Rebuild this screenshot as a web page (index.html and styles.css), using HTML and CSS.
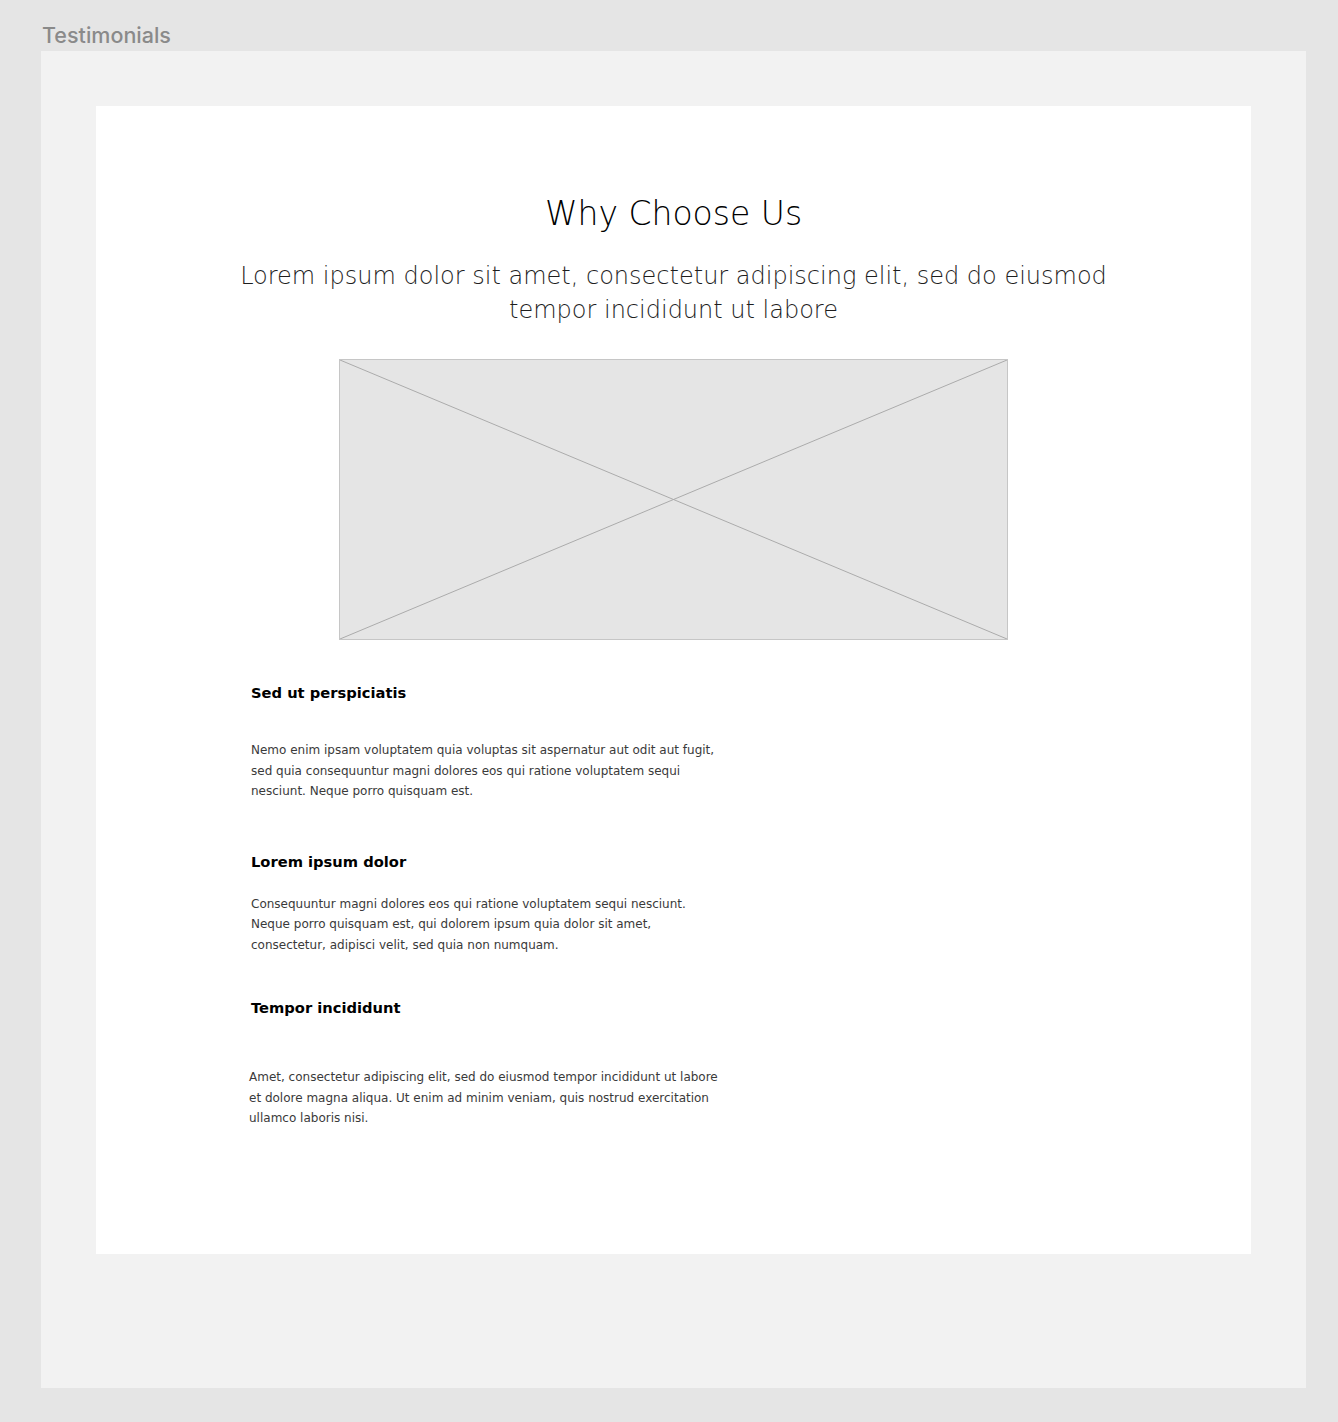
FILE: index.html
```html
<!DOCTYPE html>
<html lang="en">
<head>
<meta charset="utf-8">
<title>Testimonials</title>
<link rel="stylesheet" href="styles.css">
</head>
<body>
<div class="frame-label">Testimonials</div>
<div class="panel">
  <div class="card">
    <h1 class="title">Why Choose Us</h1>
    <p class="subtitle">Lorem ipsum dolor sit amet, consectetur adipiscing elit, sed do eiusmod<br>tempor incididunt ut labore</p>
    <div class="placeholder">
      <svg class="ph-svg" viewBox="0 0 100 100" preserveAspectRatio="none" aria-hidden="true">
        <line x1="0" y1="0" x2="100" y2="100" vector-effect="non-scaling-stroke"/>
        <line x1="100" y1="0" x2="0" y2="100" vector-effect="non-scaling-stroke"/>
      </svg>
    </div>
    <div class="features">
      <div class="feature f1">
        <h2 class="f-title">Sed ut perspiciatis</h2>
        <p class="f-text">Nemo enim ipsam voluptatem quia voluptas sit aspernatur aut odit aut fugit,<br>sed quia consequuntur magni dolores eos qui ratione voluptatem sequi<br>nesciunt. Neque porro quisquam est.</p>
      </div>
      <div class="feature f2">
        <h2 class="f-title">Lorem ipsum dolor</h2>
        <p class="f-text">Consequuntur magni dolores eos qui ratione voluptatem sequi nesciunt.<br>Neque porro quisquam est, qui dolorem ipsum quia dolor sit amet,<br>consectetur, adipisci velit, sed quia non numquam.</p>
      </div>
      <div class="feature f3">
        <h2 class="f-title">Tempor incididunt</h2>
        <p class="f-text shift">Amet, consectetur adipiscing elit, sed do eiusmod tempor incididunt ut labore<br>et dolore magna aliqua. Ut enim ad minim veniam, quis nostrud exercitation<br>ullamco laboris nisi.</p>
      </div>
    </div>
  </div>
</div>
</body>
</html>
```

FILE: styles.css
```css
html, body {
  margin: 0;
  padding: 0;
}
body {
  background: #e5e5e5;
  font-family: "DejaVu Sans", "Noto Sans", sans-serif;
  padding: 0 32px 34px 41px;
}
.frame-label {
  font-family: "Inter", "Liberation Sans", sans-serif;
  font-size: 21.5px;
  line-height: 24px;
  color: #8a8a8a;
  padding: 23px 0 4px 1px;
  font-weight: 500;
}
.panel {
  background: #f2f2f2;
  padding: 55px 55px 134px 55px;
}
.card {
  background: #ffffff;
  height: 1148px;
  box-sizing: border-box;
  padding-top: 88px;
  display: flex;
  flex-direction: column;
}
.title {
  margin: 0;
  text-align: center;
  font-weight: 300;
  font-size: 33px;
  line-height: 40px;
  color: #000;
}
.subtitle {
  margin: 25px 0 0;
  text-align: center;
  font-weight: 300;
  font-size: 24px;
  line-height: 34px;
  color: #1e1e1e;
}
.placeholder {
  align-self: center;
  margin-top: 32px;
  width: 669px;
  height: 281px;
  box-sizing: border-box;
  background: #e5e5e5;
  border: 1px solid #c6c6c6;
}
.ph-svg {
  display: block;
  width: 100%;
  height: 100%;
}
.ph-svg line {
  stroke: #ababab;
  stroke-width: 1;
}
.features {
  padding-left: 155px;
  display: flex;
  flex-direction: column;
}
.f-title {
  margin: 0;
  font-size: 14.7px;
  line-height: 20px;
  font-weight: 700;
  color: #000;
}
.f-text {
  margin: 0;
  font-size: 12px;
  line-height: 20.5px;
  color: #3a3a3a;
}
.f1 { margin-top: 43px; }
.f1 .f-text { margin-top: 37px; }
.f2 { margin-top: 50px; }
.f2 .f-text { margin-top: 22px; }
.f3 { margin-top: 43px; }
.f3 .f-text { margin-top: 49px; }
.shift { margin-left: -2px; }
```
